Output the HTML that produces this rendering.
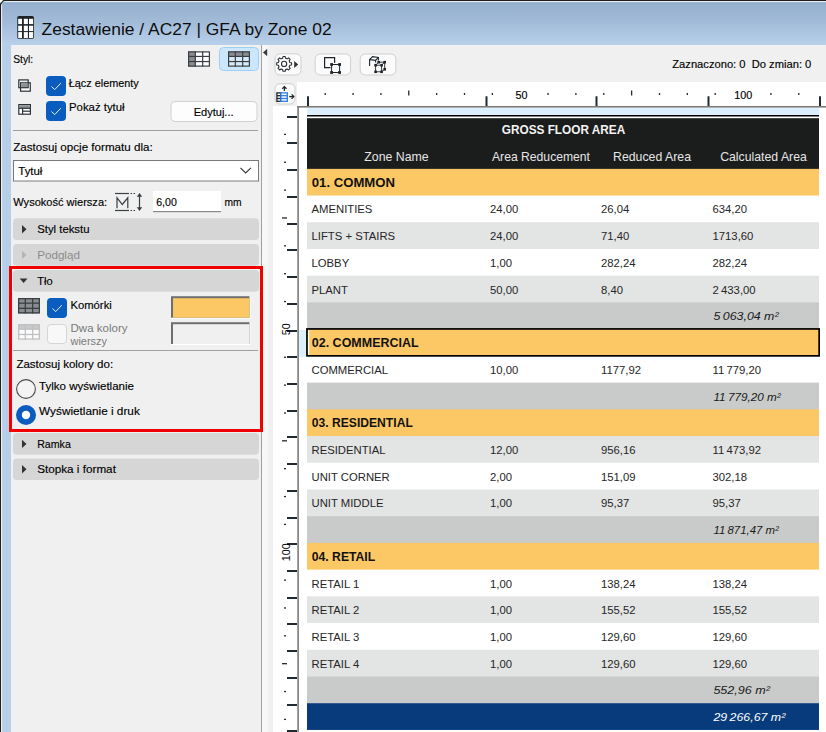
<!DOCTYPE html>
<html><head><meta charset="utf-8"><title>Zestawienie / AC27 | GFA by Zone 02</title>
<style>*{margin:0;padding:0}html,body{width:826px;height:732px;overflow:hidden;background:#f0f0f0}</style></head><body>
<svg width="826" height="732" viewBox="0 0 826 732" style="position:absolute;left:0;top:0;font-family:'Liberation Sans',sans-serif;white-space:pre"><rect x="0" y="0" width="826" height="732" fill="#b7cee8"/>
<defs><linearGradient id="tg" x1="0" y1="0" x2="0" y2="1"><stop offset="0" stop-color="#93afce"/><stop offset="0.5" stop-color="#a2bbd8"/><stop offset="1" stop-color="#b8d0ea"/></linearGradient></defs>
<rect x="0" y="0" width="826" height="45" fill="url(#tg)"/>
<rect x="0" y="0" width="826" height="1.1" fill="#1e1e1e"/>
<rect x="0" y="1.1" width="826" height="1" fill="#f4f6f8"/>
<rect x="0" y="0" width="1.1" height="732" fill="#1e1e1e"/>
<rect x="1.1" y="1.1" width="1" height="731" fill="#f4f6f8"/>
<path d="M0 0 H5 A5 5 0 0 0 0 5 Z" fill="#fff"/><path d="M0.55 5.5 A5 5 0 0 1 5.5 0.55" fill="none" stroke="#1e1e1e" stroke-width="1.1"/>
<rect x="17.3" y="15.9" width="16.6" height="22.9" rx="1.6" fill="#1d2328"/><rect x="18.2" y="18.8" width="3.8" height="5.3" fill="#fff"/><rect x="23.8" y="18.8" width="4.1" height="5.3" fill="#fff"/><rect x="29.0" y="18.8" width="4.1" height="5.3" fill="#fff"/><rect x="18.2" y="25.7" width="3.8" height="5.4" fill="#fff"/><rect x="23.8" y="25.7" width="4.1" height="5.4" fill="#fff"/><rect x="29.0" y="25.7" width="4.1" height="5.4" fill="#fff"/><rect x="18.2" y="32.1" width="3.8" height="5.9" fill="#fff"/><rect x="23.8" y="32.1" width="4.1" height="5.9" fill="#fff"/><rect x="29.0" y="32.1" width="4.1" height="5.9" fill="#fff"/>
<rect x="11" y="45" width="250" height="687" fill="#f0f0f0"/>
<rect x="261" y="45" width="1" height="687" fill="#a0a0a0"/>
<rect x="262" y="45" width="6" height="687" fill="#f7f7f7"/>
<rect x="268" y="45" width="558" height="687" fill="#f0f0f0"/>
<g transform="translate(188,51.3)"><rect x="0.0" y="0.0" width="7.333333333333333" height="5.133333333333334" fill="#8a8d90"/><rect x="7.333333333333333" y="0.0" width="7.333333333333333" height="5.133333333333334" fill="#ffffff"/><rect x="14.666666666666666" y="0.0" width="7.333333333333333" height="5.133333333333334" fill="#ffffff"/><rect x="0.0" y="5.133333333333334" width="7.333333333333333" height="5.133333333333334" fill="#8a8d90"/><rect x="7.333333333333333" y="5.133333333333334" width="7.333333333333333" height="5.133333333333334" fill="#ffffff"/><rect x="14.666666666666666" y="5.133333333333334" width="7.333333333333333" height="5.133333333333334" fill="#ffffff"/><rect x="0.0" y="10.266666666666667" width="7.333333333333333" height="5.133333333333334" fill="#8a8d90"/><rect x="7.333333333333333" y="10.266666666666667" width="7.333333333333333" height="5.133333333333334" fill="#ffffff"/><rect x="14.666666666666666" y="10.266666666666667" width="7.333333333333333" height="5.133333333333334" fill="#ffffff"/><rect x="0.6" y="0.6" width="20.8" height="14.200000000000001" fill="none" stroke="#3a3f44" stroke-width="1.2"/><line x1="7.333333333333333" y1="0" x2="7.333333333333333" y2="15.4" stroke="#3a3f44" stroke-width="1.2"/><line x1="14.666666666666666" y1="0" x2="14.666666666666666" y2="15.4" stroke="#3a3f44" stroke-width="1.2"/><line x1="0" y1="5.133333333333334" x2="22" y2="5.133333333333334" stroke="#3a3f44" stroke-width="1.2"/><line x1="0" y1="10.266666666666667" x2="22" y2="10.266666666666667" stroke="#3a3f44" stroke-width="1.2"/></g>
<rect x="219.5" y="47.5" width="39" height="23" fill="#cce6fb" rx="4" stroke="#9dcff6" stroke-width="1"/>
<g transform="translate(228,51.3)"><rect x="0.0" y="0.0" width="7.333333333333333" height="5.133333333333334" fill="#8a8d90"/><rect x="7.333333333333333" y="0.0" width="7.333333333333333" height="5.133333333333334" fill="#8a8d90"/><rect x="14.666666666666666" y="0.0" width="7.333333333333333" height="5.133333333333334" fill="#8a8d90"/><rect x="0.0" y="5.133333333333334" width="7.333333333333333" height="5.133333333333334" fill="#d8ecfb"/><rect x="7.333333333333333" y="5.133333333333334" width="7.333333333333333" height="5.133333333333334" fill="#d8ecfb"/><rect x="14.666666666666666" y="5.133333333333334" width="7.333333333333333" height="5.133333333333334" fill="#d8ecfb"/><rect x="0.0" y="10.266666666666667" width="7.333333333333333" height="5.133333333333334" fill="#d8ecfb"/><rect x="7.333333333333333" y="10.266666666666667" width="7.333333333333333" height="5.133333333333334" fill="#d8ecfb"/><rect x="14.666666666666666" y="10.266666666666667" width="7.333333333333333" height="5.133333333333334" fill="#d8ecfb"/><rect x="0.6" y="0.6" width="20.8" height="14.200000000000001" fill="none" stroke="#3a3f44" stroke-width="1.2"/><line x1="7.333333333333333" y1="0" x2="7.333333333333333" y2="15.4" stroke="#3a3f44" stroke-width="1.2"/><line x1="14.666666666666666" y1="0" x2="14.666666666666666" y2="15.4" stroke="#3a3f44" stroke-width="1.2"/><line x1="0" y1="5.133333333333334" x2="22" y2="5.133333333333334" stroke="#3a3f44" stroke-width="1.2"/><line x1="0" y1="10.266666666666667" x2="22" y2="10.266666666666667" stroke="#3a3f44" stroke-width="1.2"/></g>
<g stroke="#2e3338" stroke-width="1.2"><rect x="20.6" y="82.8" width="9.7" height="8.4" fill="#fff"/><rect x="21.2" y="83.4" width="6.4" height="3.8" fill="#8e9194" stroke="none"/><rect x="18.8" y="79.9" width="9.4" height="7.8" fill="none"/></g>
<g stroke="#2e3338" stroke-width="1.2"><rect x="18.8" y="104.6" width="11.6" height="9.6" fill="#fff"/><rect x="19.4" y="105.2" width="10.4" height="2.8" fill="#8e9194" stroke="none"/><line x1="18.8" y1="108.3" x2="30.4" y2="108.3"/><line x1="22.6" y1="108.3" x2="22.6" y2="114.2"/><line x1="22.6" y1="111.2" x2="30.4" y2="111.2"/></g>
<rect x="46" y="76" width="20" height="20" rx="4" fill="#0b5cbf"/><path d="M51.5 86.5 L54.7 89.6 L60.8 83.2" fill="none" stroke="#fff" stroke-width="0.9"/>
<rect x="46" y="101" width="20" height="20" rx="4" fill="#0b5cbf"/><path d="M51.5 111.5 L54.7 114.6 L60.8 108.2" fill="none" stroke="#fff" stroke-width="0.9"/>
<rect x="171" y="101.5" width="86" height="20" fill="#fdfdfd" rx="4" stroke="#d0d0d0" stroke-width="1"/>
<rect x="13" y="130" width="245" height="1" fill="#a0a0a0"/>
<rect x="13.5" y="160.5" width="245" height="20.5" fill="#ffffff" stroke="#7a7a7a" stroke-width="1"/>
<path d="M240.5 167.8 L245.7 173 L250.9 167.8" fill="none" stroke="#333" stroke-width="1.1"/>
<g stroke="#3a3f44" fill="none" stroke-width="1.2"><line x1="115" y1="193.5" x2="129" y2="193.5"/><line x1="115" y1="210.5" x2="129" y2="210.5"/><line x1="130.5" y1="193.5" x2="136" y2="193.5" stroke-dasharray="1.5 1.5"/><line x1="130.5" y1="210.5" x2="136" y2="210.5" stroke-dasharray="1.5 1.5"/><path d="M117 208.3 V197.8 L122.3 204.5 L127.8 197.8 V208.3"/><line x1="139.5" y1="195" x2="139.5" y2="209"/></g><path d="M136.8 196.8 L139.5 193 L142.2 196.8 Z M136.8 207.2 L139.5 211 L142.2 207.2 Z" fill="#3a3f44"/>
<rect x="153" y="191" width="68" height="21" fill="#ffffff" stroke="#e0e0e0" stroke-width="0.01"/>
<rect x="153" y="211" width="68" height="1.2" fill="#8a8a8a"/>
<rect x="13" y="218.3" width="246" height="21.7" fill="#d6d6d6" rx="4"/>
<path d="M22 225.00000000000003 L26.5 229.20000000000002 L22 233.4 Z" fill="#333"/>
<rect x="13" y="244" width="246" height="21.7" fill="#d6d6d6" rx="4"/>
<path d="M22 250.70000000000002 L26.5 254.9 L22 259.1 Z" fill="#b4b4b4"/>
<rect x="13" y="270" width="246" height="21.7" fill="#d6d6d6" rx="4"/>
<path d="M19.7 278.59999999999997 L27.5 278.59999999999997 L23.6 283.09999999999997 Z" fill="#333"/>
<g transform="translate(18,298)"><rect x="0.0" y="0.0" width="7.333333333333333" height="5.166666666666667" fill="#8a8d90"/><rect x="7.333333333333333" y="0.0" width="7.333333333333333" height="5.166666666666667" fill="#8a8d90"/><rect x="14.666666666666666" y="0.0" width="7.333333333333333" height="5.166666666666667" fill="#8a8d90"/><rect x="0.0" y="5.166666666666667" width="7.333333333333333" height="5.166666666666667" fill="#8a8d90"/><rect x="7.333333333333333" y="5.166666666666667" width="7.333333333333333" height="5.166666666666667" fill="#8a8d90"/><rect x="14.666666666666666" y="5.166666666666667" width="7.333333333333333" height="5.166666666666667" fill="#8a8d90"/><rect x="0.0" y="10.333333333333334" width="7.333333333333333" height="5.166666666666667" fill="#8a8d90"/><rect x="7.333333333333333" y="10.333333333333334" width="7.333333333333333" height="5.166666666666667" fill="#8a8d90"/><rect x="14.666666666666666" y="10.333333333333334" width="7.333333333333333" height="5.166666666666667" fill="#8a8d90"/><rect x="0.65" y="0.65" width="20.7" height="14.2" fill="none" stroke="#3a3f44" stroke-width="1.3"/><line x1="7.333333333333333" y1="0" x2="7.333333333333333" y2="15.5" stroke="#3a3f44" stroke-width="1.3"/><line x1="14.666666666666666" y1="0" x2="14.666666666666666" y2="15.5" stroke="#3a3f44" stroke-width="1.3"/><line x1="0" y1="5.166666666666667" x2="22" y2="5.166666666666667" stroke="#3a3f44" stroke-width="1.3"/><line x1="0" y1="10.333333333333334" x2="22" y2="10.333333333333334" stroke="#3a3f44" stroke-width="1.3"/></g>
<rect x="47" y="298" width="20" height="20" rx="4" fill="#0b5cbf"/><path d="M52.5 308.5 L55.7 311.6 L61.8 305.2" fill="none" stroke="#fff" stroke-width="0.9"/>
<rect x="171" y="296.2" width="79.5" height="22.5" fill="#ffffff"/>
<rect x="171" y="296.2" width="78.5" height="21.5" fill="#6e6e6e"/>
<rect x="173" y="298.2" width="76.5" height="19.5" fill="#fcc865"/>
<g transform="translate(18,324)"><rect x="0.0" y="0.0" width="7.333333333333333" height="5.233333333333333" fill="#c7c9cb"/><rect x="7.333333333333333" y="0.0" width="7.333333333333333" height="5.233333333333333" fill="#c7c9cb"/><rect x="14.666666666666666" y="0.0" width="7.333333333333333" height="5.233333333333333" fill="#c7c9cb"/><rect x="0.0" y="5.233333333333333" width="7.333333333333333" height="5.233333333333333" fill="#fbfbfb"/><rect x="7.333333333333333" y="5.233333333333333" width="7.333333333333333" height="5.233333333333333" fill="#fbfbfb"/><rect x="14.666666666666666" y="5.233333333333333" width="7.333333333333333" height="5.233333333333333" fill="#fbfbfb"/><rect x="0.0" y="10.466666666666667" width="7.333333333333333" height="5.233333333333333" fill="#fbfbfb"/><rect x="7.333333333333333" y="10.466666666666667" width="7.333333333333333" height="5.233333333333333" fill="#fbfbfb"/><rect x="14.666666666666666" y="10.466666666666667" width="7.333333333333333" height="5.233333333333333" fill="#fbfbfb"/><rect x="0.65" y="0.65" width="20.7" height="14.399999999999999" fill="none" stroke="#bfc1c3" stroke-width="1.3"/><line x1="7.333333333333333" y1="0" x2="7.333333333333333" y2="15.7" stroke="#bfc1c3" stroke-width="1.3"/><line x1="14.666666666666666" y1="0" x2="14.666666666666666" y2="15.7" stroke="#bfc1c3" stroke-width="1.3"/><line x1="0" y1="5.233333333333333" x2="22" y2="5.233333333333333" stroke="#bfc1c3" stroke-width="1.3"/><line x1="0" y1="10.466666666666667" x2="22" y2="10.466666666666667" stroke="#bfc1c3" stroke-width="1.3"/></g>
<rect x="47.5" y="324.5" width="19" height="19" rx="3.5" fill="#f8f8f8" stroke="#d6d6d6" stroke-width="1"/>
<rect x="171" y="322.2" width="79.5" height="22.8" fill="#ffffff"/>
<rect x="171" y="322.2" width="78.5" height="21.8" fill="#6e6e6e"/>
<rect x="173" y="324.2" width="76.5" height="19.8" fill="#f0f0f0"/>
<rect x="13" y="350" width="245" height="1" fill="#a0a0a0"/>
<circle cx="26" cy="389" r="9.4" fill="#f4f4f4" stroke="#4a4a4a" stroke-width="1.1"/>
<circle cx="26" cy="415" r="10" fill="#0b5cbf"/><circle cx="26" cy="415" r="4.2" fill="#fff"/>
<rect x="10.5" y="267.5" width="251" height="163" fill="none" stroke="#f00000" stroke-width="3"/>
<rect x="13" y="433" width="246" height="21.7" fill="#d6d6d6" rx="4"/>
<path d="M22 439.7 L26.5 443.9 L22 448.09999999999997 Z" fill="#333"/>
<rect x="13" y="458.4" width="246" height="21.7" fill="#d6d6d6" rx="4"/>
<path d="M22 465.09999999999997 L26.5 469.29999999999995 L22 473.49999999999994 Z" fill="#333"/>
<path d="M263 52.5 L267.2 48.7 L267.2 56.3 Z" fill="#3a3a3a"/>
<rect x="275.0" y="53.8" width="26" height="21.2" fill="#fbfbfb" rx="5" stroke="#cfcfcf" stroke-width="1"/>
<rect x="315.1" y="54.0" width="35.5" height="21" fill="#fbfbfb" rx="5" stroke="#cfcfcf" stroke-width="1"/>
<rect x="360.2" y="54.0" width="35.7" height="21" fill="#fbfbfb" rx="5" stroke="#cfcfcf" stroke-width="1"/>
<path d="M282.67 58.18 L282.99 56.48 L285.21 56.48 L285.53 58.18 L287.14 58.84 L288.56 57.87 L290.13 59.44 L289.16 60.86 L289.82 62.47 L291.52 62.79 L291.52 65.01 L289.82 65.33 L289.16 66.94 L290.13 68.36 L288.56 69.93 L287.14 68.96 L285.53 69.62 L285.21 71.32 L282.99 71.32 L282.67 69.62 L281.06 68.96 L279.64 69.93 L278.07 68.36 L279.04 66.94 L278.38 65.33 L276.68 65.01 L276.68 62.79 L278.38 62.47 L279.04 60.86 L278.07 59.44 L279.64 57.87 L281.06 58.84 Z" fill="none" stroke="#2a3035" stroke-width="1.1" stroke-linejoin="round"/><circle cx="284.1" cy="63.9" r="2.6" fill="none" stroke="#2a3035" stroke-width="1.1"/>
<path d="M294.2 61.1 L298.2 64.5 L294.2 67.9 Z" fill="#333"/>
<g stroke="#1f262b" fill="none" stroke-width="1.2"><path d="M330.5 67.6 H324.6 V57.6 H334.6 V63"/><rect x="331.6" y="64.5" width="8" height="8" stroke-width="1"/></g><rect x="330.20000000000005" y="63.1" width="2.8" height="2.8" fill="#1f262b"/><rect x="330.20000000000005" y="71.1" width="2.8" height="2.8" fill="#1f262b"/><rect x="338.20000000000005" y="63.1" width="2.8" height="2.8" fill="#1f262b"/><rect x="338.20000000000005" y="71.1" width="2.8" height="2.8" fill="#1f262b"/>
<g stroke="#1f262b" fill="none" stroke-width="1.1"><path d="M369.6 66 V59.6 L372.6 56.6 L378.4 57.4 V60.5"/><path d="M369.6 59.6 L375.6 60.3 L378.4 57.4"/><path d="M375.6 60.3 V62.5"/></g><g stroke="#1f262b" fill="none" stroke-width="0.9"><path d="M375.6 65.2 H381.6 V71.8 H375.6 Z M378.7 62.2 H384.7 V69.3 M375.6 65.2 L378.7 62.2 M381.6 65.2 L384.7 62.2 M381.6 71.8 L384.7 69.3"/></g><rect x="374.3" y="63.900000000000006" width="2.6" height="2.6" fill="#1f262b"/><rect x="380.3" y="63.900000000000006" width="2.6" height="2.6" fill="#1f262b"/><rect x="374.3" y="70.5" width="2.6" height="2.6" fill="#1f262b"/><rect x="380.3" y="70.5" width="2.6" height="2.6" fill="#1f262b"/><rect x="377.4" y="60.900000000000006" width="2.6" height="2.6" fill="#1f262b"/><rect x="383.4" y="60.900000000000006" width="2.6" height="2.6" fill="#1f262b"/><rect x="383.4" y="68.0" width="2.6" height="2.6" fill="#1f262b"/>
<rect x="275.0" y="83.7" width="20" height="20.3" fill="#fbfbfb" rx="5" stroke="#cfcfcf" stroke-width="1"/>
<g stroke="#1f262b" stroke-width="1.3" fill="none"><line x1="284.4" y1="86.8" x2="284.4" y2="91"/><path d="M282.3 88.8 L284.4 86.6 L286.5 88.8"/><line x1="289.2" y1="96.6" x2="293.6" y2="96.6"/><path d="M291.6 94.4 L293.8 96.6 L291.6 98.8"/></g><rect x="276.9" y="92.9" width="4" height="8.4" fill="#fff" stroke="#1f262b" stroke-width="1.3"/><line x1="276.9" y1="95.7" x2="280.9" y2="95.7" stroke="#1f262b" stroke-width="1.3"/><line x1="276.9" y1="98.5" x2="280.9" y2="98.5" stroke="#1f262b" stroke-width="1.3"/><rect x="280.9" y="92.9" width="6.4" height="8.4" fill="#fff" stroke="#2b7be6" stroke-width="1.3"/><line x1="280.9" y1="95.7" x2="287.3" y2="95.7" stroke="#2b7be6" stroke-width="1.3"/><line x1="280.9" y1="98.5" x2="287.3" y2="98.5" stroke="#2b7be6" stroke-width="1.3"/>
<rect x="297" y="82" width="529" height="25" fill="#ffffff"/>
<rect x="273" y="106" width="25" height="626" fill="#ffffff"/>
<rect x="298" y="107" width="528" height="625" fill="#ffffff"/>
<rect x="297" y="106" width="529" height="1.6" fill="#7b7b7b"/>
<rect x="297.3" y="106" width="1.6" height="626" fill="#7b7b7b"/>
<rect x="307" y="96.3" width="2" height="9.7" fill="#1f2a33"/>
<rect x="485.5" y="96.3" width="2" height="9.7" fill="#1f2a33"/>
<rect x="595.5" y="96.3" width="2" height="9.7" fill="#1f2a33"/>
<rect x="707.5" y="96.3" width="2" height="9.7" fill="#1f2a33"/>
<rect x="819" y="96.3" width="2" height="9.7" fill="#1f2a33"/>
<rect x="324.55625" y="93" width="1.3" height="2" fill="#1f2a33"/>
<rect x="352.41249999999997" y="93" width="1.3" height="2" fill="#1f2a33"/>
<rect x="380.26874999999995" y="93" width="1.3" height="2" fill="#1f2a33"/>
<rect x="408.125" y="90.5" width="1.3" height="5" fill="#1f2a33"/>
<rect x="435.98125" y="93" width="1.3" height="2" fill="#1f2a33"/>
<rect x="463.8375" y="93" width="1.3" height="2" fill="#1f2a33"/>
<rect x="491.69375" y="93" width="1.3" height="2" fill="#1f2a33"/>
<rect x="547.40625" y="93" width="1.3" height="2" fill="#1f2a33"/>
<rect x="575.2624999999999" y="93" width="1.3" height="2" fill="#1f2a33"/>
<rect x="603.11875" y="93" width="1.3" height="2" fill="#1f2a33"/>
<rect x="630.975" y="90.5" width="1.3" height="5" fill="#1f2a33"/>
<rect x="658.83125" y="93" width="1.3" height="2" fill="#1f2a33"/>
<rect x="686.6875" y="93" width="1.3" height="2" fill="#1f2a33"/>
<rect x="714.5437499999999" y="93" width="1.3" height="2" fill="#1f2a33"/>
<rect x="770.25625" y="93" width="1.3" height="2" fill="#1f2a33"/>
<rect x="798.1125" y="93" width="1.3" height="2" fill="#1f2a33"/>
<rect x="287" y="116" width="10" height="2" fill="#1f2a33"/>
<rect x="287" y="142" width="10" height="2" fill="#1f2a33"/>
<rect x="287" y="169" width="10" height="2" fill="#1f2a33"/>
<rect x="287" y="196" width="10" height="2" fill="#1f2a33"/>
<rect x="287" y="223" width="10" height="2" fill="#1f2a33"/>
<rect x="287" y="249" width="10" height="2" fill="#1f2a33"/>
<rect x="287" y="276" width="10" height="2" fill="#1f2a33"/>
<rect x="287" y="303" width="10" height="2" fill="#1f2a33"/>
<rect x="287" y="330" width="10" height="2" fill="#1f2a33"/>
<rect x="287" y="356" width="10" height="2" fill="#1f2a33"/>
<rect x="287" y="383" width="10" height="2" fill="#1f2a33"/>
<rect x="287" y="410" width="10" height="2" fill="#1f2a33"/>
<rect x="287" y="436" width="10" height="2" fill="#1f2a33"/>
<rect x="287" y="463" width="10" height="2" fill="#1f2a33"/>
<rect x="287" y="490" width="10" height="2" fill="#1f2a33"/>
<rect x="287" y="517" width="10" height="2" fill="#1f2a33"/>
<rect x="287" y="543" width="10" height="2" fill="#1f2a33"/>
<rect x="287" y="570" width="10" height="2" fill="#1f2a33"/>
<rect x="287" y="597" width="10" height="2" fill="#1f2a33"/>
<rect x="287" y="623" width="10" height="2" fill="#1f2a33"/>
<rect x="287" y="650" width="10" height="2" fill="#1f2a33"/>
<rect x="287" y="677" width="10" height="2" fill="#1f2a33"/>
<rect x="287" y="704" width="10" height="2" fill="#1f2a33"/>
<rect x="287" y="730" width="10" height="2" fill="#1f2a33"/>
<rect x="284" y="133.75625" width="2" height="1.3" fill="#1f2a33"/>
<rect x="284" y="161.6125" width="2" height="1.3" fill="#1f2a33"/>
<rect x="284" y="189.46875" width="2" height="1.3" fill="#1f2a33"/>
<rect x="282" y="217.32500000000002" width="5" height="1.3" fill="#1f2a33"/>
<rect x="284" y="245.18125" width="2" height="1.3" fill="#1f2a33"/>
<rect x="284" y="273.03749999999997" width="2" height="1.3" fill="#1f2a33"/>
<rect x="284" y="300.89374999999995" width="2" height="1.3" fill="#1f2a33"/>
<rect x="284" y="356.60624999999993" width="2" height="1.3" fill="#1f2a33"/>
<rect x="284" y="384.4625" width="2" height="1.3" fill="#1f2a33"/>
<rect x="284" y="412.31874999999997" width="2" height="1.3" fill="#1f2a33"/>
<rect x="282" y="440.17499999999995" width="5" height="1.3" fill="#1f2a33"/>
<rect x="284" y="468.03124999999994" width="2" height="1.3" fill="#1f2a33"/>
<rect x="284" y="495.8875" width="2" height="1.3" fill="#1f2a33"/>
<rect x="284" y="523.74375" width="2" height="1.3" fill="#1f2a33"/>
<rect x="284" y="579.45625" width="2" height="1.3" fill="#1f2a33"/>
<rect x="284" y="607.3124999999999" width="2" height="1.3" fill="#1f2a33"/>
<rect x="284" y="635.1687499999999" width="2" height="1.3" fill="#1f2a33"/>
<rect x="282" y="663.025" width="5" height="1.3" fill="#1f2a33"/>
<rect x="284" y="690.8812499999999" width="2" height="1.3" fill="#1f2a33"/>
<rect x="284" y="718.7375" width="2" height="1.3" fill="#1f2a33"/>
<text transform="translate(290.3,329.35) rotate(-90)" font-size="10.8" text-anchor="middle" y="0">50</text>
<text transform="translate(290.3,552.2) rotate(-90)" font-size="10.8" text-anchor="middle" y="0">100</text>
<rect x="307" y="108" width="512" height="6.8" fill="#dbf0fc"/>
<rect x="307" y="115" width="512" height="1.7" fill="#000"/>
<rect x="307" y="116.7" width="512" height="1.5" fill="#fff"/>
<rect x="307" y="118.2" width="512" height="24.93" fill="#1b1c1c"/>
<rect x="307" y="142.13" width="512" height="27.72" fill="#1b1c1c"/>
<rect x="307" y="168.85" width="512" height="27.72" fill="#fcc865"/>
<rect x="307" y="195.57" width="512" height="27.72" fill="#ffffff"/>
<rect x="307" y="222.29" width="512" height="27.72" fill="#e3e4e4"/>
<rect x="307" y="249.0" width="512" height="27.72" fill="#ffffff"/>
<rect x="307" y="275.72" width="512" height="27.72" fill="#e3e4e4"/>
<rect x="307" y="302.44" width="512" height="27.72" fill="#c9caca"/>
<rect x="307" y="329.16" width="512" height="27.72" fill="#fcc865"/>
<rect x="307" y="355.88" width="512" height="27.72" fill="#ffffff"/>
<rect x="307" y="382.6" width="512" height="27.72" fill="#c9caca"/>
<rect x="307" y="409.32" width="512" height="27.72" fill="#fcc865"/>
<rect x="307" y="436.04" width="512" height="27.72" fill="#e3e4e4"/>
<rect x="307" y="462.76" width="512" height="27.72" fill="#ffffff"/>
<rect x="307" y="489.48" width="512" height="27.72" fill="#e3e4e4"/>
<rect x="307" y="516.2" width="512" height="27.72" fill="#c9caca"/>
<rect x="307" y="542.91" width="512" height="27.72" fill="#fcc865"/>
<rect x="307" y="569.63" width="512" height="27.72" fill="#ffffff"/>
<rect x="307" y="596.35" width="512" height="27.72" fill="#e3e4e4"/>
<rect x="307" y="623.07" width="512" height="27.72" fill="#ffffff"/>
<rect x="307" y="649.79" width="512" height="27.72" fill="#e3e4e4"/>
<rect x="307" y="676.51" width="512" height="27.72" fill="#c9caca"/>
<rect x="307" y="703.23" width="512" height="26.72" fill="#073b7b"/>
<rect x="299.2" y="329.9" width="6.6" height="27.1" fill="#dbf0fc"/>
<rect x="308" y="329.8" width="1.2" height="25" fill="#fff"/>
<rect x="306.95" y="328.95" width="512.2" height="26.9" fill="none" stroke="#000" stroke-width="1.7"/>
<text x="41.6" y="34.6" font-size="17.4" fill="#0d0d0d" textLength="290" lengthAdjust="spacingAndGlyphs">Zestawienie / AC27 | GFA by Zone 02</text>
<text x="13.3" y="62.8" font-size="11.5" stroke="#000" stroke-width="0.15" textLength="19.9" lengthAdjust="spacingAndGlyphs">Styl:</text>
<text x="68.8" y="87.3" font-size="11.5" stroke="#000" stroke-width="0.15" textLength="70" lengthAdjust="spacingAndGlyphs">Łącz elementy</text>
<text x="69" y="110.8" font-size="11.5" stroke="#000" stroke-width="0.15" textLength="55.6" lengthAdjust="spacingAndGlyphs">Pokaż tytuł</text>
<text x="193.7" y="115.9" font-size="11.5" stroke="#000" stroke-width="0.15" textLength="39.9" lengthAdjust="spacingAndGlyphs">Edytuj...</text>
<text x="13.2" y="151.4" font-size="11.5" stroke="#000" stroke-width="0.15" textLength="139.5" lengthAdjust="spacingAndGlyphs">Zastosuj opcje formatu dla:</text>
<text x="18.3" y="175" font-size="11.5" stroke="#000" stroke-width="0.15" textLength="24.1" lengthAdjust="spacingAndGlyphs">Tytuł</text>
<text x="13.3" y="205.6" font-size="11.5" stroke="#000" stroke-width="0.15" textLength="93.8" lengthAdjust="spacingAndGlyphs">Wysokość wiersza:</text>
<text x="156.2" y="205.6" font-size="11.5" stroke="#000" stroke-width="0.15" textLength="20.6" lengthAdjust="spacingAndGlyphs">6,00</text>
<text x="224.5" y="206" font-size="11.5" stroke="#000" stroke-width="0.15" textLength="17.1" lengthAdjust="spacingAndGlyphs">mm</text>
<text x="37.2" y="233.10000000000002" font-size="11.5" stroke="#000" stroke-width="0.15" textLength="52.3" lengthAdjust="spacingAndGlyphs">Styl tekstu</text>
<text x="37.2" y="258.8" font-size="11.5" fill="#8c8c8c" textLength="42.7" lengthAdjust="spacingAndGlyphs">Podgląd</text>
<text x="37.2" y="284.8" font-size="11.5" stroke="#000" stroke-width="0.15" textLength="15.4" lengthAdjust="spacingAndGlyphs">Tło</text>
<text x="70.4" y="308.7" font-size="11.5" stroke="#000" stroke-width="0.15" textLength="41.4" lengthAdjust="spacingAndGlyphs">Komórki</text>
<text x="70.5" y="332.3" font-size="11.5" fill="#7a7a7a" textLength="57" lengthAdjust="spacingAndGlyphs">Dwa kolory</text>
<text x="70.5" y="344.6" font-size="11.5" fill="#7a7a7a" textLength="36.4" lengthAdjust="spacingAndGlyphs">wierszy</text>
<text x="16.4" y="367.5" font-size="11.5" stroke="#000" stroke-width="0.15" textLength="96.7" lengthAdjust="spacingAndGlyphs">Zastosuj kolory do:</text>
<text x="39.1" y="389.7" font-size="11.5" stroke="#000" stroke-width="0.15" textLength="94.9" lengthAdjust="spacingAndGlyphs">Tylko wyświetlanie</text>
<text x="39.1" y="415.2" font-size="11.5" stroke="#000" stroke-width="0.15" textLength="100.7" lengthAdjust="spacingAndGlyphs">Wyświetlanie i druk</text>
<text x="37.2" y="447.8" font-size="11.5" stroke="#000" stroke-width="0.15" textLength="33.6" lengthAdjust="spacingAndGlyphs">Ramka</text>
<text x="37.2" y="473.2" font-size="11.5" stroke="#000" stroke-width="0.15" textLength="78.7" lengthAdjust="spacingAndGlyphs">Stopka i format</text>
<text x="672.3" y="68" font-size="11.5" stroke="#000" stroke-width="0.15" textLength="139" lengthAdjust="spacingAndGlyphs">Zaznaczono: 0  Do zmian: 0</text>
<text x="521.5" y="99" font-size="10.8" stroke="#000" stroke-width="0.15" text-anchor="middle" textLength="12" lengthAdjust="spacingAndGlyphs">50</text>
<text x="743.3" y="99" font-size="10.8" stroke="#000" stroke-width="0.15" text-anchor="middle" textLength="18" lengthAdjust="spacingAndGlyphs">100</text>
<text x="563.5" y="134.2" font-size="12" font-weight="700" fill="#f4f4f4" text-anchor="middle" textLength="123.5" lengthAdjust="spacingAndGlyphs">GROSS FLOOR AREA</text>
<text x="396.5" y="160.6" font-size="12.2" fill="#e6e6e6" text-anchor="middle" textLength="64.4" lengthAdjust="spacingAndGlyphs">Zone Name</text>
<text x="541" y="160.6" font-size="12.2" fill="#e6e6e6" text-anchor="middle" textLength="98" lengthAdjust="spacingAndGlyphs">Area Reducement</text>
<text x="652" y="160.6" font-size="12.2" fill="#e6e6e6" text-anchor="middle" textLength="78" lengthAdjust="spacingAndGlyphs">Reduced Area</text>
<text x="763.5" y="160.6" font-size="12.2" fill="#e6e6e6" text-anchor="middle" textLength="86.6" lengthAdjust="spacingAndGlyphs">Calculated Area</text>
<text x="311.8" y="186.75" font-size="12.4" font-weight="700" fill="#111" textLength="83.2" lengthAdjust="spacingAndGlyphs">01. COMMON</text>
<text x="311.5" y="213.47" font-size="11.3" fill="#262626">AMENITIES</text>
<text x="490" y="213.47" font-size="11.3" fill="#262626">24,00</text>
<text x="601" y="213.47" font-size="11.3" fill="#262626">26,04</text>
<text x="712.5" y="213.47" font-size="11.3" fill="#262626">634,20</text>
<text x="311.5" y="240.19" font-size="11.3" fill="#262626">LIFTS + STAIRS</text>
<text x="490" y="240.19" font-size="11.3" fill="#262626">24,00</text>
<text x="601" y="240.19" font-size="11.3" fill="#262626">71,40</text>
<text x="712.5" y="240.19" font-size="11.3" fill="#262626">1713,60</text>
<text x="311.5" y="266.9" font-size="11.3" fill="#262626">LOBBY</text>
<text x="490" y="266.9" font-size="11.3" fill="#262626">1,00</text>
<text x="601" y="266.9" font-size="11.3" fill="#262626">282,24</text>
<text x="712.5" y="266.9" font-size="11.3" fill="#262626">282,24</text>
<text x="311.5" y="293.62" font-size="11.3" fill="#262626">PLANT</text>
<text x="490" y="293.62" font-size="11.3" fill="#262626">50,00</text>
<text x="601" y="293.62" font-size="11.3" fill="#262626">8,40</text>
<text x="712.5" y="293.62" font-size="11.3" fill="#262626">2 433,00</text>
<text x="713.4" y="320.34" font-size="11.6" font-style="italic" fill="#1a1a1a" textLength="65.2" lengthAdjust="spacingAndGlyphs">5 063,04 m²</text>
<text x="311.8" y="347.06" font-size="12.4" font-weight="700" fill="#111" textLength="106.8" lengthAdjust="spacingAndGlyphs">02. COMMERCIAL</text>
<text x="311.5" y="373.78" font-size="11.3" fill="#262626">COMMERCIAL</text>
<text x="490" y="373.78" font-size="11.3" fill="#262626">10,00</text>
<text x="601" y="373.78" font-size="11.3" fill="#262626">1177,92</text>
<text x="712.5" y="373.78" font-size="11.3" fill="#262626">11 779,20</text>
<text x="713.4" y="400.5" font-size="11.6" font-style="italic" fill="#1a1a1a" textLength="67.2" lengthAdjust="spacingAndGlyphs">11 779,20 m²</text>
<text x="311.8" y="427.22" font-size="12.4" font-weight="700" fill="#111" textLength="101" lengthAdjust="spacingAndGlyphs">03. RESIDENTIAL</text>
<text x="311.5" y="453.94" font-size="11.3" fill="#262626">RESIDENTIAL</text>
<text x="490" y="453.94" font-size="11.3" fill="#262626">12,00</text>
<text x="601" y="453.94" font-size="11.3" fill="#262626">956,16</text>
<text x="712.5" y="453.94" font-size="11.3" fill="#262626">11 473,92</text>
<text x="311.5" y="480.66" font-size="11.3" fill="#262626">UNIT CORNER</text>
<text x="490" y="480.66" font-size="11.3" fill="#262626">2,00</text>
<text x="601" y="480.66" font-size="11.3" fill="#262626">151,09</text>
<text x="712.5" y="480.66" font-size="11.3" fill="#262626">302,18</text>
<text x="311.5" y="507.38" font-size="11.3" fill="#262626">UNIT MIDDLE</text>
<text x="490" y="507.38" font-size="11.3" fill="#262626">1,00</text>
<text x="601" y="507.38" font-size="11.3" fill="#262626">95,37</text>
<text x="712.5" y="507.38" font-size="11.3" fill="#262626">95,37</text>
<text x="713.4" y="534.1" font-size="11.6" font-style="italic" fill="#1a1a1a" textLength="65.4" lengthAdjust="spacingAndGlyphs">11 871,47 m²</text>
<text x="311.8" y="560.81" font-size="12.4" font-weight="700" fill="#111" textLength="63.4" lengthAdjust="spacingAndGlyphs">04. RETAIL</text>
<text x="311.5" y="587.53" font-size="11.3" fill="#262626">RETAIL 1</text>
<text x="490" y="587.53" font-size="11.3" fill="#262626">1,00</text>
<text x="601" y="587.53" font-size="11.3" fill="#262626">138,24</text>
<text x="712.5" y="587.53" font-size="11.3" fill="#262626">138,24</text>
<text x="311.5" y="614.25" font-size="11.3" fill="#262626">RETAIL 2</text>
<text x="490" y="614.25" font-size="11.3" fill="#262626">1,00</text>
<text x="601" y="614.25" font-size="11.3" fill="#262626">155,52</text>
<text x="712.5" y="614.25" font-size="11.3" fill="#262626">155,52</text>
<text x="311.5" y="640.97" font-size="11.3" fill="#262626">RETAIL 3</text>
<text x="490" y="640.97" font-size="11.3" fill="#262626">1,00</text>
<text x="601" y="640.97" font-size="11.3" fill="#262626">129,60</text>
<text x="712.5" y="640.97" font-size="11.3" fill="#262626">129,60</text>
<text x="311.5" y="667.69" font-size="11.3" fill="#262626">RETAIL 4</text>
<text x="490" y="667.69" font-size="11.3" fill="#262626">1,00</text>
<text x="601" y="667.69" font-size="11.3" fill="#262626">129,60</text>
<text x="712.5" y="667.69" font-size="11.3" fill="#262626">129,60</text>
<text x="713.4" y="694.41" font-size="11.6" font-style="italic" fill="#1a1a1a" textLength="56.5" lengthAdjust="spacingAndGlyphs">552,96 m²</text>
<text x="713.4" y="721.13" font-size="11.6" font-style="italic" fill="#ffffff" textLength="71.9" lengthAdjust="spacingAndGlyphs">29 266,67 m²</text></svg>
</body></html>
